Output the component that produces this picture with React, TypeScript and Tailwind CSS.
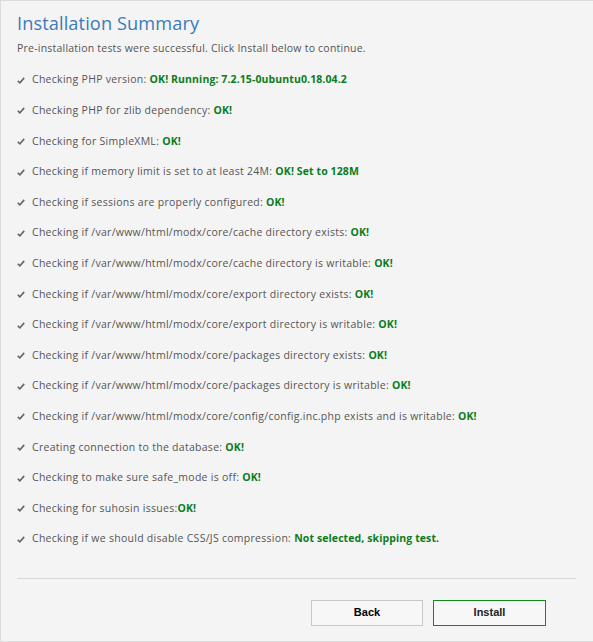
import React from "react";

const items: [string, string][] = [
  ["Checking PHP version: ", "OK! Running: 7.2.15-0ubuntu0.18.04.2"],
  ["Checking PHP for zlib dependency: ", "OK!"],
  ["Checking for SimpleXML: ", "OK!"],
  ["Checking if memory limit is set to at least 24M: ", "OK! Set to 128M"],
  ["Checking if sessions are properly configured: ", "OK!"],
  ["Checking if /var/www/html/modx/core/cache directory exists: ", "OK!"],
  ["Checking if /var/www/html/modx/core/cache directory is writable: ", "OK!"],
  ["Checking if /var/www/html/modx/core/export directory exists: ", "OK!"],
  ["Checking if /var/www/html/modx/core/export directory is writable: ", "OK!"],
  ["Checking if /var/www/html/modx/core/packages directory exists: ", "OK!"],
  ["Checking if /var/www/html/modx/core/packages directory is writable: ", "OK!"],
  ["Checking if /var/www/html/modx/core/config/config.inc.php exists and is writable: ", "OK!"],
  ["Creating connection to the database: ", "OK!"],
  ["Checking to make sure safe_mode is off: ", "OK!"],
  ["Checking for suhosin issues:", "OK!"],
  ["Checking if we should disable CSS/JS compression: ", "Not selected, skipping test."],
];

function Check() {
  return (
    <svg width="8" height="7" viewBox="0 0 8 7" className="shrink-0">
      <path d="M0.8 3.8 L2.9 5.8 L7.2 0.9" fill="none" stroke="#666" strokeWidth="1.6" />
    </svg>
  );
}

export default function App() {
  return (
    <div
      className="w-[593px] h-[642px] border-t border-l border-b border-[#dcdcdc] bg-[#f4f4f4] flex flex-col px-[16px] text-[#555]"
      style={{ fontFamily: '"Open Sans", sans-serif' }}
    >
      <h1 className="text-[18.2px] leading-[26px] text-[#3b7bba] mt-[9px] tracking-[0.1px]">Installation Summary</h1>
      <p className="text-[10.5px] leading-[16px] mt-[4px] tracking-[0.22px]">
        Pre-installation tests were successful. Click Install below to continue.
      </p>
      <ul className="mt-[9px] flex flex-col">
        {items.map(([a, b], i) => (
          <li key={i} className="h-[30.6px] flex items-center gap-[7px] text-[10.5px] tracking-[0.28px]">
            <Check />
            <span>
              {a}
              <span className="font-bold text-[#0a7d22] tracking-[0.1px]">{b}</span>
            </span>
          </li>
        ))}
      </ul>
      <div className="mt-[23px] border-t border-[#d8d8d8] mr-[1px]" />
      <div className="mt-[21px] flex justify-end gap-[10px] pr-[31px]" style={{ fontFamily: '"Liberation Sans", Arial, sans-serif' }}>
        <button className="w-[112px] h-[26px] border border-[#c8c8c8] bg-[#f7f7f7] text-[11px] font-bold text-black">
          Back
        </button>
        <button className="w-[113px] h-[26px] border border-[#118a1d] bg-[#f7f7f7] text-[11px] font-bold text-[#222]">
          Install
        </button>
      </div>
    </div>
  );
}
